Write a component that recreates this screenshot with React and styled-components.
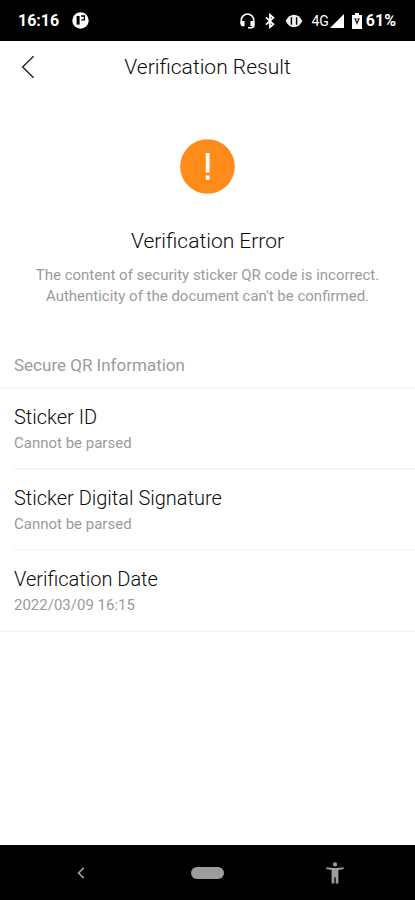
import React from 'react';
import styled, { createGlobalStyle, ThemeProvider } from 'styled-components';

const theme = {
  black: '#000000',
  white: '#ffffff',
  text: '#0c0c0c',
  muted: '#9b9b9b',
  line: '#f6f6f6',
  orange: '#ff8c1a',
  nav: '#9c9c9c',
};

const GlobalStyle = createGlobalStyle`
  * {
    box-sizing: border-box;
  }
  body {
    margin: 0;
    background-color: ${theme.white};
    color: ${theme.text};
    font-family: Roboto, 'Liberation Sans', sans-serif;
  }
  button {
    display: flex;
    align-items: center;
    justify-content: center;
    padding: 0;
    border: none;
    background: none;
    color: inherit;
    cursor: pointer;
  }
  svg {
    display: block;
  }
`;

const Screen = styled.div`
  display: flex;
  flex-direction: column;
  min-height: 100vh;
`;

const StatusBar = styled.div`
  display: flex;
  align-items: center;
  justify-content: space-between;
  height: 41px;
  padding: 0 19px 0 18px;
  background-color: ${props => props.theme.black};
  color: ${props => props.theme.white};
  font-size: 16px;
  font-weight: 700;
`;

const StatusGroup = styled.div`
  display: flex;
  align-items: center;
  gap: ${props => props.gap}px;
`;

const Network = styled.span`
  font-size: 14px;
  font-weight: 400;
`;

const Header = styled.header`
  display: grid;
  grid-template-columns: 56px 1fr 56px;
  align-items: center;
  height: 51px;

  h1 {
    margin: 0;
    font-size: 21px;
    font-weight: 300;
    line-height: 24px;
    text-align: center;
  }
  button {
    height: 48px;
  }
`;

const Result = styled.section`
  display: flex;
  flex-direction: column;
  align-items: center;
  padding: 47px 16px 46px;
  text-align: center;

  h2 {
    margin: 35px 0 12px;
    font-size: 21px;
    font-weight: 300;
    line-height: 24px;
  }
  p {
    max-width: 352px;
    margin: 0;
    color: ${props => props.theme.muted};
    font-size: 15px;
    line-height: 21px;
  }
`;

const SectionTitle = styled.h3`
  margin: 0;
  padding: 0 14px 10px;
  border-bottom: 2px solid ${props => props.theme.line};
  color: ${props => props.theme.muted};
  font-size: 17px;
  font-weight: 400;
  line-height: 24px;
`;

const InfoList = styled.dl`
  margin: 0;
  border-bottom: 2px solid ${props => props.theme.line};
`;

const InfoRow = styled.div`
  margin-left: 14px;
  padding: 16px 14px 15px 0;

  & + & {
    border-top: 2px solid ${props => props.theme.line};
  }
  dt {
    font-size: 20px;
    font-weight: 300;
    line-height: 24px;
  }
  dd {
    margin: 4px 0 0;
    color: ${props => props.theme.muted};
    font-size: 15px;
    line-height: 20px;
  }
`;

const NavBar = styled.nav`
  display: grid;
  grid-template-columns: 1fr 1fr 1fr;
  justify-items: center;
  height: 55px;
  margin-top: auto;
  padding: 0 17px;
  background-color: ${props => props.theme.black};
  color: ${props => props.theme.nav};

  button {
    width: 48px;
  }
`;

const HomePill = styled.span`
  width: 33px;
  height: 12px;
  border-radius: 6px;
  background-color: ${props => props.theme.nav};
`;

const AppIcon = () => (
  <svg width="17" height="17" viewBox="0 0 17 17">
    <circle cx="8.5" cy="8.5" r="8.2" fill="#fff" />
    <path d="M4.6 4h3v8.6h-3z" fill="#000" />
    <path d="M9 4h3.4v3.8H9.3" fill="none" stroke="#000" strokeWidth="1.3" />
  </svg>
);

const HeadsetIcon = () => (
  <svg width="15" height="16" viewBox="0 0 15 16">
    <path
      d="M1.3 11V7.2a6.2 6.2 0 0 1 12.4 0v5.4q0 2.2-2.2 2.2H8"
      fill="none"
      stroke="#fff"
      strokeWidth="1.6"
    />
    <path d="M.6 8h3.9v5.3H2.6q-2 0-2-2zM10.5 8h3.9v5.3h-3.9z" fill="#fff" />
  </svg>
);

const BluetoothIcon = () => (
  <svg width="10" height="16" viewBox="0 0 10 16">
    <path
      d="M1 4.3l7.4 7L5 14.2V1.8l3.4 2.9-7.4 7"
      fill="none"
      stroke="#fff"
      strokeWidth="1.8"
    />
  </svg>
);

const EyeIcon = () => (
  <svg width="18" height="14" viewBox="0 0 18 14">
    <path d="M.6 7Q4 .8 9 .8T17.4 7Q14 13.2 9 13.2T.6 7z" fill="#eee" />
    <path d="M6.4 3.2v7.6M11.6 3.2v7.6" fill="none" stroke="#000" strokeWidth="1.4" />
  </svg>
);

const SignalIcon = () => (
  <svg width="14" height="14" viewBox="0 0 14 14">
    <path d="M14 0v14H0z" fill="#fff" />
  </svg>
);

const BatteryIcon = () => (
  <svg width="10" height="16" viewBox="0 0 10 16">
    <path d="M3 0h4v2h3v14H0V2h3z" fill="#fff" />
    <path d="M2.2 5.2h5.6L5 12z" fill="#222" />
    <path d="M5 4v4" stroke="#fff" strokeWidth="1.2" />
  </svg>
);

const BackIcon = () => (
  <svg width="14" height="24" viewBox="0 0 14 24">
    <path d="M12.6 1.2L1.6 12l11 10.8" fill="none" stroke="#222" strokeWidth="1.4" />
  </svg>
);

const WarningIcon = () => (
  <svg width="55" height="55" viewBox="0 0 55 55">
    <circle cx="27.5" cy="27.5" r="27.3" fill={theme.orange} />
    <path d="M25.8 14h3.8v19.6h-3.8zM25.8 36.4h3.8v4.4h-3.8z" fill="#fff" />
  </svg>
);

const NavBackIcon = () => (
  <svg width="8" height="12" viewBox="0 0 8 12">
    <path d="M6.8.8L1.6 6l5.2 5.2" fill="none" stroke="currentColor" strokeWidth="1.7" />
  </svg>
);

const PersonIcon = () => (
  <svg width="18" height="22" viewBox="0 0 18 22">
    <circle cx="9" cy="2.4" r="2.1" fill="currentColor" />
    <path
      d="M.4 5.2Q4.6 6 9 6t8.6-.8l.2 1.9q-2.6.7-5.4.9v13.5H9.7v-6.3H8.3v6.3H5.6V8Q2.8 7.8.2 7.1z"
      fill="currentColor"
    />
  </svg>
);

const info = [
  { label: 'Sticker ID', value: 'Cannot be parsed' },
  { label: 'Sticker Digital Signature', value: 'Cannot be parsed' },
  { label: 'Verification Date', value: '2022/03/09 16:15' },
];

const App = () => {
  return (
    <ThemeProvider theme={theme}>
      <GlobalStyle />
      <Screen>
        <StatusBar>
          <StatusGroup gap={13}>
            <span>16:16</span>
            <AppIcon />
          </StatusGroup>
          <StatusGroup gap={8}>
            <StatusGroup gap={10}>
              <HeadsetIcon />
              <BluetoothIcon />
              <EyeIcon />
            </StatusGroup>
            <StatusGroup gap={1}>
              <Network>4G</Network>
              <SignalIcon />
            </StatusGroup>
            <StatusGroup gap={4}>
              <BatteryIcon />
              <span>61%</span>
            </StatusGroup>
          </StatusGroup>
        </StatusBar>
        <Header>
          <button type="button" aria-label="Back">
            <BackIcon />
          </button>
          <h1>Verification Result</h1>
        </Header>
        <main>
          <Result>
            <WarningIcon />
            <h2>Verification Error</h2>
            <p>
              The content of security sticker QR code is incorrect. Authenticity
              of the document can't be confirmed.
            </p>
          </Result>
          <SectionTitle>Secure QR Information</SectionTitle>
          <InfoList>
            {info.map(item => (
              <InfoRow key={item.label}>
                <dt>{item.label}</dt>
                <dd>{item.value}</dd>
              </InfoRow>
            ))}
          </InfoList>
        </main>
        <NavBar>
          <button type="button" aria-label="Back">
            <NavBackIcon />
          </button>
          <button type="button" aria-label="Home">
            <HomePill />
          </button>
          <button type="button" aria-label="Accessibility">
            <PersonIcon />
          </button>
        </NavBar>
      </Screen>
    </ThemeProvider>
  );
};

export default App;
